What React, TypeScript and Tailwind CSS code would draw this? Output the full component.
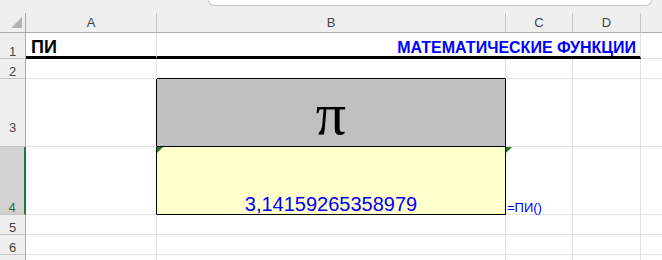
const grid = 'border-r border-b border-[#e1e1e1]';
const colHead = 'flex items-center justify-center border-r border-b border-r-[#c6c6c6] border-b-[#ababab] bg-[#efefef] text-[13px] text-[#444]';
const rowHead = 'flex items-end justify-center border-r border-b border-r-[#ababab] border-b-[#c6c6c6] bg-[#efefef] text-[13px] leading-none text-[#444]';

function ErrorMark() {
  return (
    <span className="absolute left-0 top-0 h-0 w-0 border-t-[6px] border-r-[6px] border-t-[#1f7a1f] border-r-transparent" />
  );
}

export default function App() {
  return (
    <div className="h-[260px] w-[662px] overflow-hidden bg-white font-['Liberation_Sans',Arial,sans-serif]">
      {/* formula bar edge */}
      <div className="h-[13px] bg-[#efefef]">
        <div className="ml-[208px] h-[6px] w-[444px] rounded-b-[6px] border-x border-b border-[#c6c6c6] bg-white" />
      </div>

      <div className="grid grid-cols-[26px_131px_349px_67px_68px_1fr] grid-rows-[20px_26px_20px_68px_68px_20px_20px_20px]">
        {/* column headers */}
        <div className="relative border-r border-b border-r-[#ababab] border-b-[#ababab] bg-[#efefef]">
          <span className="absolute left-[11px] top-[4px] h-0 w-0 border-b-[11px] border-l-[11px] border-b-[#b4b4b4] border-l-transparent" />
        </div>
        <div className={colHead}>A</div>
        <div className={colHead}>B</div>
        <div className={colHead}>C</div>
        <div className={colHead}>D</div>
        <div className="border-b border-b-[#ababab] bg-[#efefef]" />

        {/* row 1 */}
        <div className={rowHead}>1</div>
        <div className="flex items-end border-r border-b-[3px] border-r-[#e1e1e1] border-b-black pl-[5px] text-[18px] font-bold leading-none text-black">
          ПИ
        </div>
        <div className="col-span-3 flex items-end justify-end border-r border-b-[3px] border-r-[#e1e1e1] border-b-black pr-[4px] text-[16px] font-bold leading-none text-[#0000ff]">
          МАТЕМАТИЧЕСКИЕ ФУНКЦИИ
        </div>
        <div className="border-b border-[#e1e1e1]" />

        {/* row 2 */}
        <div className={rowHead}>2</div>
        <div className={grid} />
        <div className="border-r border-b border-r-[#e1e1e1] border-b-black" />
        <div className={grid} />
        <div className={grid} />
        <div className="border-b border-[#e1e1e1]" />

        {/* row 3 */}
        <div className={`${rowHead} pb-[12px]`}>3</div>
        <div className="border-r border-b border-r-black border-b-[#e1e1e1]" />
        <div className="flex items-center justify-center border-r border-b border-black bg-[#c0c0c0] pt-[2px] font-['Liberation_Serif','Times_New_Roman',serif] text-[60px] leading-none text-black">
          π
        </div>
        <div className={grid} />
        <div className={grid} />
        <div className="border-b border-[#e1e1e1]" />

        {/* row 4 */}
        <div className="flex items-end justify-center border-r-2 border-b border-r-[#217346] border-b-[#c6c6c6] bg-[#d2d2d2] text-[13px] leading-none text-[#217346]">
          4
        </div>
        <div className="border-r border-b border-r-black border-b-[#e1e1e1]" />
        <div className="relative flex items-end justify-center border-r border-b border-black bg-[#ffffcc] text-[20px] leading-none text-[#0000ff]">
          <ErrorMark />
          3,14159265358979
        </div>
        <div className={`${grid} relative flex items-end pl-[1px] text-[13px] leading-none text-[#0000ff]`}>
          <ErrorMark />
          =ПИ()
        </div>
        <div className={grid} />
        <div className="border-b border-[#e1e1e1]" />

        {/* rows 5-7 */}
        {[5, 6, 7].map((n) => (
          <div key={n} className="contents">
            <div className={rowHead}>{n < 7 ? n : ''}</div>
            <div className={grid} />
            <div className={grid} />
            <div className={grid} />
            <div className={grid} />
            <div className="border-b border-[#e1e1e1]" />
          </div>
        ))}
      </div>
    </div>
  );
}
